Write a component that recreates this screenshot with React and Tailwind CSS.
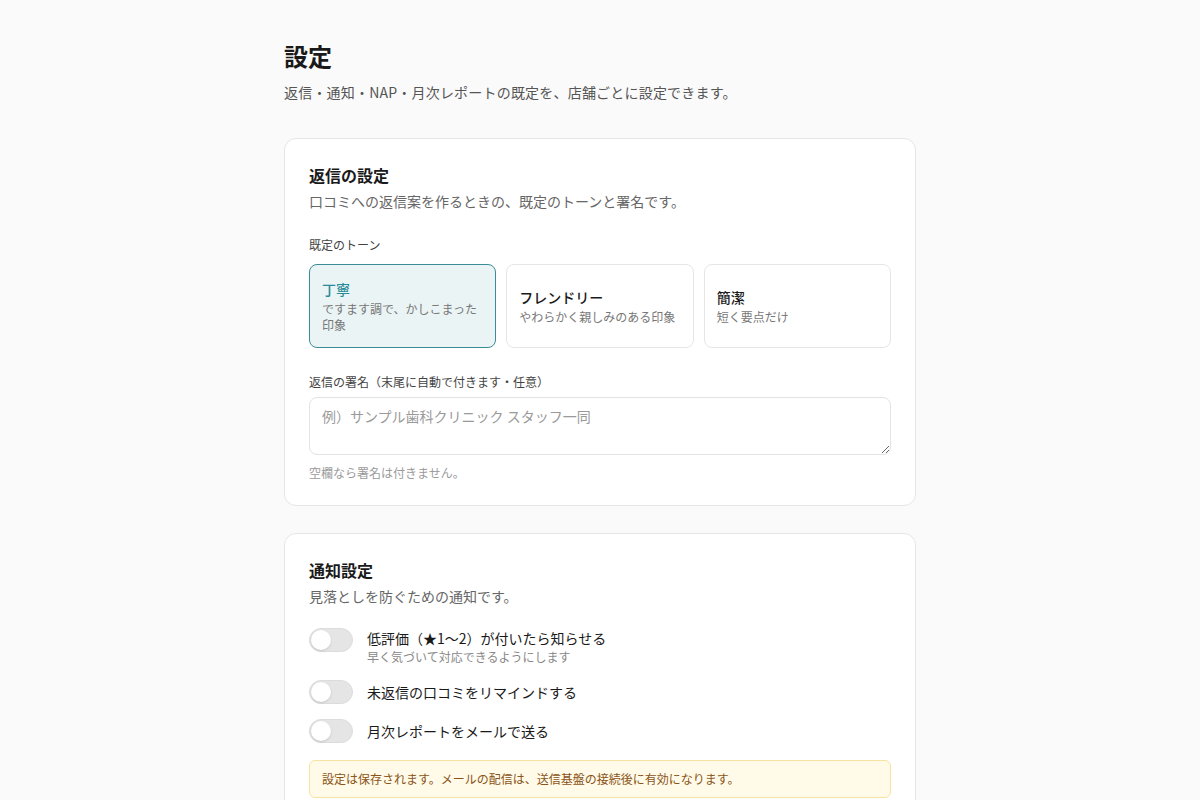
import React, { useState } from 'react'

const tones = [
	{ id: 'polite', title: '丁寧', desc: 'ですます調で、かしこまった印象' },
	{ id: 'friendly', title: 'フレンドリー', desc: 'やわらかく親しみのある印象' },
	{ id: 'concise', title: '簡潔', desc: '短く要点だけ' },
]

const Toggle = ({ on, onClick }) => (
	<button
		type="button"
		onClick={onClick}
		className={`relative h-6 w-11 shrink-0 rounded-full border ${on ? 'bg-[#2a8c98] border-[#2a8c98]' : 'bg-[#e5e5e5] border-[#dcdcdc]'}`}>
		<span className={`absolute top-[1px] h-5 w-5 rounded-full bg-white shadow-sm ${on ? 'left-[21px]' : 'left-[1px]'}`} />
	</button>
)

const App = () => {
	const [tone, setTone] = useState('polite')
	const [toggles, setToggles] = useState({ low: false, remind: false, monthly: false })

	const flip = (key) => setToggles((t) => ({ ...t, [key]: !t[key] }))

	return (
		<div className="min-h-screen bg-[#fafafa] text-[#1a1a1a]" style={{ fontFamily: '"Noto Sans CJK JP", "Noto Sans", sans-serif' }}>
			<div className="mx-auto w-[632px] pt-10 pb-10">
				<h1 className="text-2xl font-bold leading-8">設定</h1>
				<p className="mt-2.5 text-sm leading-5 tracking-[0.2px] text-[#555]">返信・通知・NAP・月次レポートの既定を、店舗ごとに設定できます。</p>

				<section className="mt-9 rounded-xl border border-[#e6e6e6] bg-white p-6">
					<h2 className="text-base font-bold leading-6">返信の設定</h2>
					<p className="mt-1 text-sm leading-5 text-[#666]">口コミへの返信案を作るときの、既定のトーンと署名です。</p>

					<p className="mt-[26px] text-xs leading-4 text-[#444]">既定のトーン</p>
					<div className="mt-[11px] grid grid-cols-3 gap-[10px]">
						{tones.map((t) => {
							const active = tone === t.id
							return (
								<button
									key={t.id}
									type="button"
									onClick={() => setTone(t.id)}
									className={`flex h-[84px] flex-col justify-center rounded-lg border px-3 text-left ${active ? 'border-[#3b8c96] bg-[#eaf4f5]' : 'border-[#e6e6e6] bg-white'}`}>
									<span className={`text-sm font-medium leading-5 ${active ? 'text-[#2a8c98]' : 'text-[#1a1a1a]'}`}>{t.title}</span>
									<span className="mt-0.5 text-xs leading-4 text-[#777]">{t.desc}</span>
								</button>
							)
						})}
					</div>

					<p className="mt-[26px] text-xs leading-4 text-[#444]">返信の署名（末尾に自動で付きます・任意）</p>
					<textarea
						className="mt-[7px] block h-[58px] w-full rounded-lg border border-[#e3e3e3] px-3 py-2 text-sm leading-5 placeholder-[#9a9a9a] outline-none"
						placeholder="例）サンプル歯科クリニック スタッフ一同"
					/>
					<p className="mt-2.5 text-xs leading-4 text-[#9a9a9a]">空欄なら署名は付きません。</p>
				</section>

				<section className="mt-[27px] rounded-xl border border-[#e6e6e6] bg-white p-6">
					<h2 className="text-base font-bold leading-6">通知設定</h2>
					<p className="mt-1 text-sm leading-5 text-[#666]">見落としを防ぐための通知です。</p>

					<div className="mt-[22px] flex items-start gap-3.5">
						<Toggle on={toggles.low} onClick={() => flip('low')} />
						<div>
							<p className="text-sm leading-5">低評価（★1〜2）が付いたら知らせる</p>
							<p className="mt-px text-xs leading-4 text-[#888]">早く気づいて対応できるようにします</p>
						</div>
					</div>
					<div className="mt-[15px] flex items-center gap-3.5">
						<Toggle on={toggles.remind} onClick={() => flip('remind')} />
						<p className="text-sm leading-5">未返信の口コミをリマインドする</p>
					</div>
					<div className="mt-[15px] flex items-center gap-3.5">
						<Toggle on={toggles.monthly} onClick={() => flip('monthly')} />
						<p className="text-sm leading-5">月次レポートをメールで送る</p>
					</div>

					<div className="mt-[17px] rounded-md border border-[#f6e3a1] bg-[#fffbe8] px-3 py-2.5 text-xs leading-4 text-[#8a5418]">
						設定は保存されます。メールの配信は、送信基盤の接続後に有効になります。
					</div>
				</section>
			</div>
		</div>
	)
}

export default App
